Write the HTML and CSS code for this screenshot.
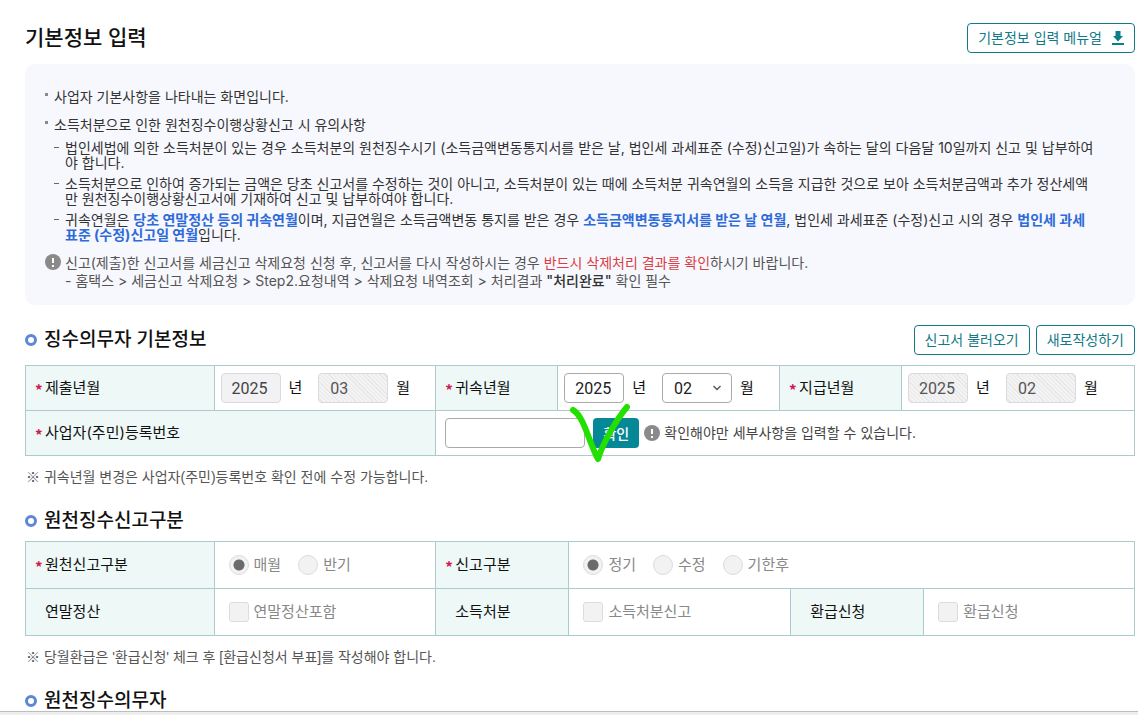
FILE: index.html
```html
<!DOCTYPE html>
<html lang="ko">

<head>
    <meta charset="UTF-8">
    <meta name="viewport" content="width=device-width, initial-scale=1.0">
    <title>기본정보 입력</title>
    <link rel="stylesheet" href="styles.css">
</head>

<body>
    <main class="content">
        <header class="page-head">
            <h1>기본정보 입력</h1>
            <button type="button" class="btn">기본정보 입력 메뉴얼
                <svg class="down" width="12" height="14" viewBox="0 0 12 14">
                    <path d="M3.5 0h5v5H11L6 10.5 1 5h2.5z" />
                    <path d="M0 12h12v2H0z" />
                </svg>
            </button>
        </header>

        <!-- 안내문 -->
        <section class="notice">
            <ul class="dots">
                <li>사업자 기본사항을 나타내는 화면입니다.</li>
                <li>소득처분으로 인한 원천징수이행상황신고 시 유의사항</li>
            </ul>
            <ul class="dashes">
                <li>법인세법에 의한 소득처분이 있는 경우 소득처분의 원천징수시기 (소득금액변동통지서를 받은 날, 법인세 과세표준 (수정)신고일)가 속하는 달의 다음달 10일까지 신고 및 납부하여야 합니다.</li>
                <li>소득처분으로 인하여 증가되는 금액은 당초 신고서를 수정하는 것이 아니고, 소득처분이 있는 때에 소득처분 귀속연월의 소득을 지급한 것으로 보아 소득처분금액과 추가 정산세액만 원천징수이행상황신고서에 기재하여 신고 및 납부하여야 합니다.</li>
                <li>귀속연월은 <b>당초 연말정산 등의 귀속연월</b>이며, 지급연월은 소득금액변동 통지를 받은 경우 <b>소득금액변동통지서를 받은 날 연월</b>, 법인세 과세표준 (수정)신고 시의 경우 <b>법인세 과세표준 (수정)신고일 연월</b>입니다.</li>
            </ul>
            <div class="warn">
                <svg class="info" width="16" height="16" viewBox="0 0 16 16">
                    <circle cx="8" cy="8" r="8" />
                    <path d="M8 4v5M8 11v2" />
                </svg>
                <div>
                    <p>신고(제출)한 신고서를 세금신고 삭제요청 신청 후, 신고서를 다시 작성하시는 경우 <em>반드시 삭제처리 결과를 확인</em>하시기 바랍니다.</p>
                    <p>- 홈택스 &gt; 세금신고 삭제요청 &gt; Step2.요청내역 &gt; 삭제요청 내역조회 &gt; 처리결과 <strong>"처리완료"</strong> 확인 필수</p>
                </div>
            </div>
        </section>

        <!-- 징수의무자 기본정보 -->
        <section>
            <div class="section-head first">
                <h2>징수의무자 기본정보</h2>
                <div class="btns">
                    <button type="button" class="btn">신고서 불러오기</button>
                    <button type="button" class="btn">새로작성하기</button>
                </div>
            </div>
            <table class="form basic">
                <colgroup>
                    <col class="w17">
                    <col class="w20">
                    <col class="w11">
                    <col class="w20">
                    <col class="w11">
                    <col>
                </colgroup>
                <tr>
                    <th scope="row"><i>*</i>제출년월</th>
                    <td>
                        <div class="ym">
                            <input type="text" id="subYear" value="2025" readonly>
                            <label for="subYear">년</label>
                            <select id="subMonth" disabled>
                                <option>03</option>
                            </select>
                            <label for="subMonth">월</label>
                        </div>
                    </td>
                    <th scope="row"><i>*</i>귀속년월</th>
                    <td>
                        <div class="ym">
                            <input type="text" id="revYear" value="2025">
                            <label for="revYear">년</label>
                            <select id="revMonth">
                                <option>02</option>
                            </select>
                            <label for="revMonth">월</label>
                        </div>
                    </td>
                    <th scope="row"><i>*</i>지급년월</th>
                    <td>
                        <div class="ym">
                            <input type="text" id="payYear" value="2025" disabled>
                            <label for="payYear">년</label>
                            <select id="payMonth" disabled>
                                <option>02</option>
                            </select>
                            <label for="payMonth">월</label>
                        </div>
                    </td>
                </tr>
                <tr>
                    <th scope="row" colspan="2"><i>*</i><label for="bizNo">사업자(주민)등록번호</label></th>
                    <td colspan="4">
                        <div class="biz">
                            <input type="text" id="bizNo">
                            <div class="confirm">
                                <button type="button" class="btn-fill">확인</button>
                                <svg class="check" width="64" height="64" viewBox="0 0 64 64">
                                    <path d="M6 8C17 14 22 41 31 57C36 41 49 18 60 5" />
                                </svg>
                            </div>
                            <svg class="info" width="16" height="16" viewBox="0 0 16 16">
                                <circle cx="8" cy="8" r="8" />
                                <path d="M8 4v5M8 11v2" />
                            </svg>
                            <span>확인해야만 세부사항을 입력할 수 있습니다.</span>
                        </div>
                    </td>
                </tr>
            </table>
            <p class="note">※ 귀속년월 변경은 사업자(주민)등록번호 확인 전에 수정 가능합니다.</p>
        </section>

        <!-- 원천징수신고구분 -->
        <section>
            <div class="section-head">
                <h2>원천징수신고구분</h2>
            </div>
            <table class="form kind">
                <colgroup>
                    <col class="w17">
                    <col class="w20">
                    <col class="w12">
                    <col class="w20">
                    <col class="w12">
                    <col>
                </colgroup>
                <tr>
                    <th scope="row"><i>*</i>원천신고구분</th>
                    <td>
                        <div class="opts">
                            <label><input type="radio" name="period" checked disabled>매월</label>
                            <label><input type="radio" name="period" disabled>반기</label>
                        </div>
                    </td>
                    <th scope="row"><i>*</i>신고구분</th>
                    <td colspan="3">
                        <div class="opts">
                            <label><input type="radio" name="type" checked disabled>정기</label>
                            <label><input type="radio" name="type" disabled>수정</label>
                            <label><input type="radio" name="type" disabled>기한후</label>
                        </div>
                    </td>
                </tr>
                <tr>
                    <th scope="row" class="plain">연말정산</th>
                    <td>
                        <div class="opts">
                            <label><input type="checkbox" disabled>연말정산포함</label>
                        </div>
                    </td>
                    <th scope="row" class="plain">소득처분</th>
                    <td>
                        <div class="opts">
                            <label><input type="checkbox" disabled>소득처분신고</label>
                        </div>
                    </td>
                    <th scope="row" class="plain">환급신청</th>
                    <td>
                        <div class="opts">
                            <label><input type="checkbox" disabled>환급신청</label>
                        </div>
                    </td>
                </tr>
            </table>
            <p class="note">※ 당월환급은 '환급신청' 체크 후 [환급신청서 부표]를 작성해야 합니다.</p>
        </section>

        <section>
            <div class="section-head">
                <h2>원천징수의무자</h2>
            </div>
        </section>
    </main>
    <footer class="bottom"></footer>
</body>

</html>
```
FILE: styles.css
```css
*,
*::before {
    margin: 0;
    padding: 0;
    box-sizing: border-box;
}

body,
html {
    height: 100%;
}

body {
    display: flex;
    flex-direction: column;
    font-family: Inter, "Noto Sans CJK KR", sans-serif;
    font-size: 14px;
    color: #333;
    background-color: #fff;
}

button {
    font-family: inherit;
}

input,
select {
    font-family: Roboto, "Noto Sans CJK KR", sans-serif;
}

.content {
    flex: 1;
    min-height: 0;
    overflow: hidden;
    padding: 23px 3px 0 25px;
}

.bottom {
    flex: 0 0 4px;
    background-color: #eee;
    border-top: 1px solid #b9bfbf;
}

.page-head,
.section-head {
    display: flex;
    align-items: center;
    justify-content: space-between;
}

h1 {
    font-size: 21px;
    line-height: 30px;
    font-weight: 500;
    color: #111;
}

.btn {
    display: flex;
    align-items: center;
    gap: 10px;
    height: 30px;
    padding: 0 10px;
    font-size: 14px;
    line-height: 20px;
    color: #117a86;
    background-color: #fff;
    border: 1px solid #117a86;
    border-radius: 4px;
}

.down {
    fill: #0a7f88;
}

/* 안내문 */
.notice {
    margin-top: 11px;
    padding: 23px 38px 15px 20px;
    background-color: #f7f8fe;
    border-radius: 10px;
}

.notice ul {
    list-style: none;
}

.dots li {
    position: relative;
    padding-left: 9px;
    line-height: 20px;
    margin-bottom: 8px;
}

.dots li:last-child {
    margin-bottom: 5px;
}

.dots li::before {
    content: "";
    position: absolute;
    left: 0;
    top: 6px;
    width: 3px;
    height: 3px;
    background-color: #888;
}

.dashes {
    padding-left: 9px;
}

.dashes li {
    position: relative;
    padding-left: 11px;
    line-height: 15px;
    margin-bottom: 6px;
    word-break: break-all;
}

.dashes li::before {
    content: "";
    position: absolute;
    left: 0;
    top: 7px;
    width: 5px;
    height: 1px;
    background-color: #666;
}

.dashes b {
    font-weight: 700;
    color: #2f6bd8;
}

.warn {
    display: flex;
    align-items: flex-start;
    gap: 4px;
    padding-top: 6px;
    line-height: 18px;
    color: #555;
}

.warn em {
    font-style: normal;
    color: #dc3c44;
}

.warn strong {
    font-weight: 500;
    color: #333;
}

.info {
    flex: none;
    fill: #8a8a8a;
    stroke: #fff;
    stroke-width: 2;
}

.info circle {
    stroke: none;
}

/* 소제목 */
.section-head {
    height: 30px;
    margin-bottom: 5px;
}

.section-head.first {
    margin: 20px 0 10px;
}

h2 {
    display: flex;
    align-items: center;
    gap: 7px;
    font-size: 19px;
    line-height: 30px;
    font-weight: 500;
    color: #111;
}

h2::before {
    content: "";
    width: 12px;
    height: 12px;
    border: 3px solid #5b87d6;
    border-radius: 50%;
}

.btns {
    display: flex;
    gap: 6px;
}

/* 입력 표 */
.form {
    width: 100%;
    table-layout: fixed;
    border-collapse: collapse;
    font-size: 15px;
    line-height: 22px;
}

.w11 {
    width: 11%;
}

.w12 {
    width: 12%;
}

.w17 {
    width: 17%;
}

.w20 {
    width: 20%;
}

.basic tr {
    height: 45px;
}

.kind tr {
    height: 47px;
}

.form th,
.form td {
    border: 1px solid #adcacd;
    vertical-align: middle;
}

.form th {
    padding-left: 9px;
    text-align: left;
    font-weight: 400;
    color: #111;
    background-color: #edf8f7;
}

.form th.plain {
    padding-left: 19px;
}

.form th i {
    display: inline-block;
    width: 10px;
    font-family: "Noto Sans CJK KR", sans-serif;
    font-style: normal;
    font-weight: 700;
    line-height: 15px;
    vertical-align: -3px;
    color: #d01852;
}

.ym {
    display: flex;
    align-items: center;
    padding-left: 6px;
    color: #111;
}

.ym input,
.ym select,
.biz input {
    flex: none;
    height: 30px;
    font-size: 16px;
    color: #222;
    background-color: #fff;
    border: 1px solid #aaa;
    border-radius: 4px;
}

.ym input {
    width: 60px;
    padding: 0 10px;
}

.ym select {
    width: 70px;
    padding-left: 11px;
    margin-left: 16px;
    appearance: none;
    background: #fff url("data:image/svg+xml,%3Csvg xmlns='http://www.w3.org/2000/svg' width='8' height='6'%3E%3Cpath d='M.5 1L4 4.5 7.5 1' fill='none' stroke='%23555' stroke-width='1.4'/%3E%3C/svg%3E") no-repeat right 10px center;
}

.ym label {
    margin-left: 8px;
}

.ym input:read-only {
    color: #444;
    background-color: #f2f2f4;
    border-color: #dadadd;
}

.ym input:disabled,
.ym select:disabled {
    color: #555;
    opacity: 1;
    background: repeating-linear-gradient(45deg, #f3f3f4 0 2px, #e8e8ea 2px 3px);
    border-color: #dadadd;
}

.biz {
    display: flex;
    align-items: center;
    padding-left: 9px;
    font-size: 14px;
    color: #444;
}

.biz input {
    width: 140px;
    padding: 0 10px;
}

.confirm {
    position: relative;
    margin: 0 5px 0 8px;
}

.btn-fill {
    display: block;
    width: 46px;
    height: 30px;
    font-size: 14px;
    font-weight: 500;
    color: #fff;
    background-color: #058896;
    border: 0;
    border-radius: 4px;
}

/* 확인 버튼 위 체크 표시 */
.check {
    position: absolute;
    left: -26px;
    top: -16px;
    fill: none;
    stroke: #23e000;
    stroke-width: 6;
    stroke-linecap: round;
    stroke-linejoin: round;
    pointer-events: none;
}

.biz span {
    margin-left: 4px;
}

.note {
    margin: 10px 0 18px;
    padding-left: 1px;
    font-family: "Liberation Sans", "Noto Sans CJK KR", sans-serif;
    line-height: 22px;
    color: #555;
}

.opts {
    display: flex;
    gap: 17px;
    padding-left: 14px;
    color: #888;
}

.opts label {
    display: flex;
    align-items: center;
    gap: 5px;
}

.opts input {
    appearance: none;
    width: 20px;
    height: 20px;
    background-color: #f2f2f2;
    border: 1px solid #dcdcdc;
    border-radius: 3px;
}

.opts input[type="radio"] {
    border-radius: 50%;
}

.opts input[type="radio"]:checked {
    background-image: radial-gradient(circle, #6b6b6b 0 5px, transparent 6px);
}
```
